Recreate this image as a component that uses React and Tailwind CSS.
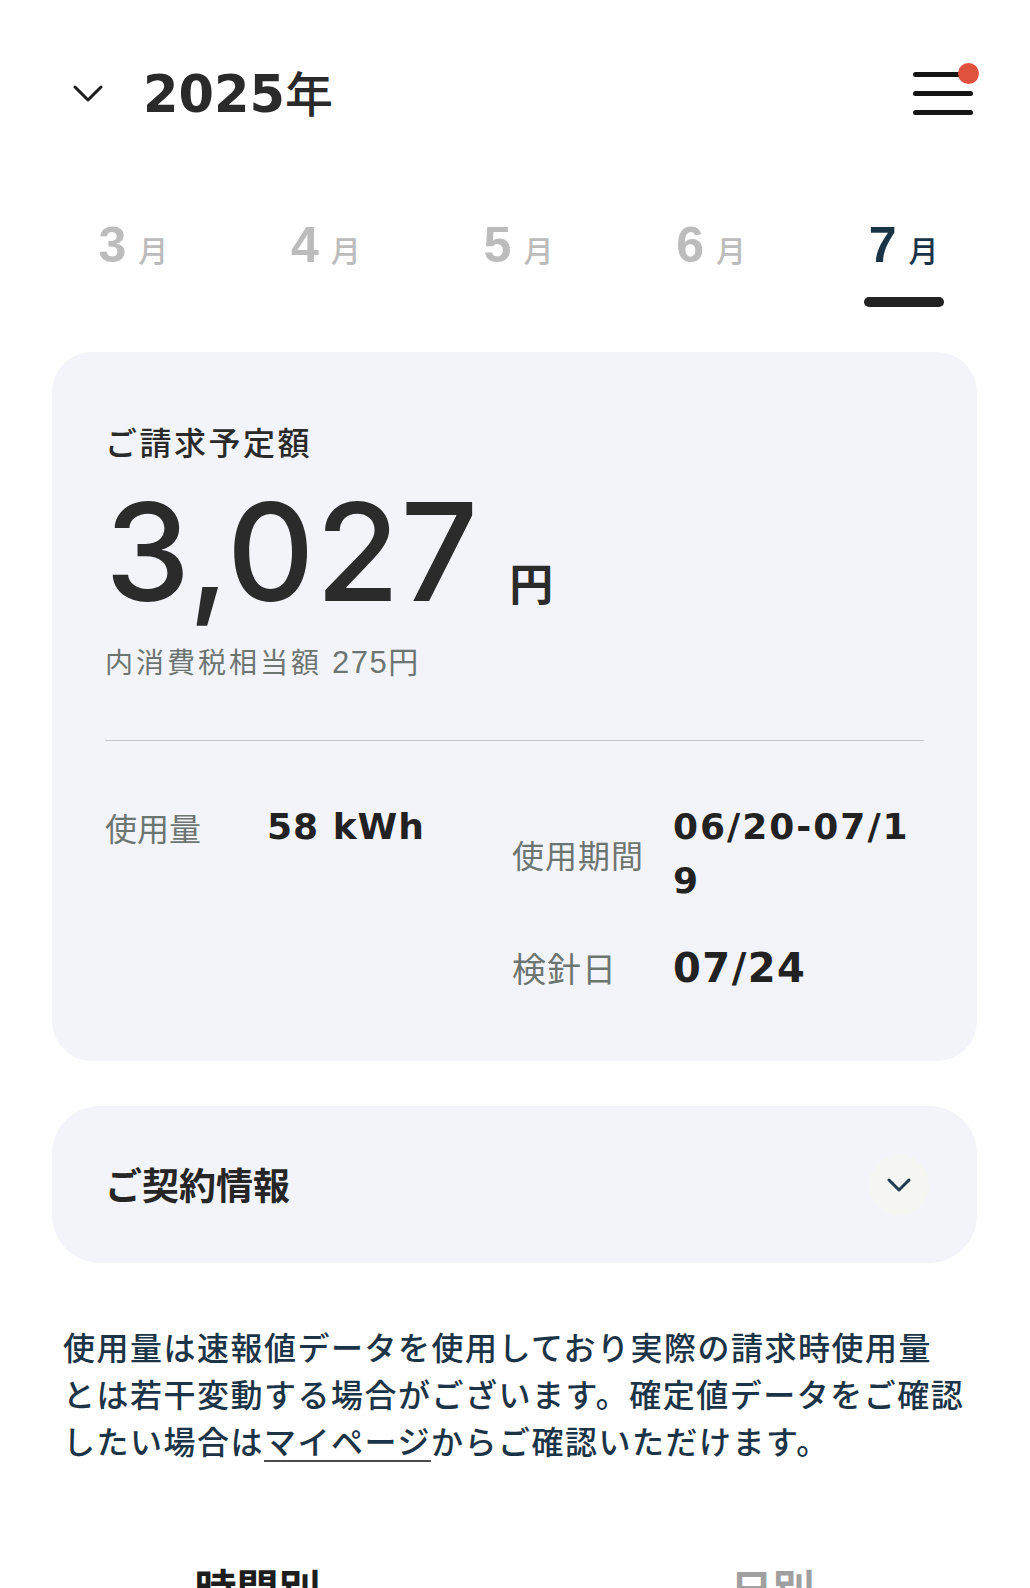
import React from 'react'

const months = ['3', '4', '5', '6', '7']

export default function App() {
  const active = '7'

  return (
    <div className="w-[1030px] h-[1588px] overflow-hidden bg-white font-['Noto_Sans_CJK_JP',sans-serif]">
      {/* header */}
      <div className="flex items-center h-[62px] mt-[62px] pl-[73px] pr-[57px]">
        <svg width="30" height="17" viewBox="0 0 30 17" fill="none">
          <polyline points="2,2 15,15 28,2" stroke="#1c1c1c" strokeWidth="3" strokeLinecap="round" strokeLinejoin="round" />
        </svg>
        <div className="ml-[40px] flex items-baseline text-[#2a2a2a]">
          <span className="font-['DejaVu_Sans',sans-serif] font-bold text-[51px] leading-none">2025</span>
          <span className="text-[48px] leading-none font-medium">年</span>
        </div>
        <div className="ml-auto relative w-[60px] h-[43px] flex flex-col justify-between">
          <span className="block h-[5px] w-full rounded-full bg-[#151515]" />
          <span className="block h-[5px] w-full rounded-full bg-[#151515]" />
          <span className="block h-[5px] w-full rounded-full bg-[#151515]" />
          <span className="absolute left-[45px] top-[-9px] w-[21px] h-[21px] rounded-full bg-[#e0513e]" />
        </div>
      </div>

      {/* month tabs */}
      <div className="flex w-[963px] ml-[37px] mt-[96px]">
        {months.map((m) => (
          <div key={m} className="flex-1 flex flex-col items-center">
            <div className={'flex items-baseline ' + (m === active ? 'text-[#1a3447]' : 'text-[#bcbcbc]')}>
              <span className="font-['Liberation_Sans',sans-serif] font-bold text-[50px] leading-none">{m}</span>
              <span className="ml-[12px] text-[30px] leading-none font-medium">月</span>
            </div>
            <div className={'mt-[27px] h-[10px] w-[80px] rounded-full ' + (m === active ? 'bg-[#222222]' : 'bg-transparent')} />
          </div>
        ))}
      </div>

      {/* bill card */}
      <div className="ml-[52px] w-[925px] mt-[45px] rounded-[40px] bg-[#f3f4f9] pt-[73px] px-[53px] pb-[66px]">
        <div className="text-[32px] leading-none tracking-[2.5px] font-medium text-[#2a2a2a]">ご請求予定額</div>
        <div className="flex items-baseline mt-[27px] text-[#2b2b2b]">
          <span className="font-['Inter',sans-serif] font-medium text-[136px] leading-none tracking-[1px]">3,027</span>
          <span className="ml-[30px] text-[44px] leading-none font-bold">円</span>
        </div>
        <div className="mt-[25px] flex items-baseline text-[#6d7572] leading-none">
          <span className="text-[28px] tracking-[3px]">内消費税相当額</span>
          <span className="ml-[10px] font-['Liberation_Sans',sans-serif] text-[31px] tracking-[1.5px]">275</span>
          <span className="text-[30px]">円</span>
        </div>
        <div className="mt-[62px] h-px bg-[#c3c6cc]" />

        <div className="flex items-start mt-[59px]">
          <div className="w-[407px] flex items-center">
            <span className="w-[162px] text-[32px] leading-[54px] text-[#6d7572]">使用量</span>
            <span className="font-['DejaVu_Sans',sans-serif] font-bold text-[36px] leading-[54px] tracking-[1px] text-[#222222]">58 kWh</span>
          </div>
          <div className="flex flex-col">
            <div className="flex items-center">
              <span className="w-[161px] text-[32px] leading-none tracking-[1px] text-[#6d7572]">使用期間</span>
              <span className="w-[251px] break-all font-['DejaVu_Sans',sans-serif] font-bold text-[36px] leading-[54px] tracking-[2px] text-[#222222]">06/20-07/19</span>
            </div>
            <div className="flex items-center mt-[33px]">
              <span className="w-[161px] text-[34px] leading-none tracking-[1px] text-[#6d7572]">検針日</span>
              <span className="font-['DejaVu_Sans',sans-serif] font-bold text-[40px] leading-[54px] tracking-[1.5px] text-[#222222]">07/24</span>
            </div>
          </div>
        </div>
      </div>

      {/* contract card */}
      <div className="ml-[52px] w-[925px] mt-[45px] h-[157px] rounded-[48px] bg-[#f3f4f9] flex items-center pl-[53px] pr-[48px]">
        <span className="text-[37px] leading-none font-bold text-[#262626]">ご契約情報</span>
        <div className="ml-auto w-[60px] h-[60px] rounded-full bg-[#f5f5f2] flex items-center justify-center">
          <svg width="24" height="14" viewBox="0 0 24 14" fill="none">
            <polyline points="2,2 12,12 22,2" stroke="#1d3a4f" strokeWidth="3" strokeLinecap="round" strokeLinejoin="round" />
          </svg>
        </div>
      </div>

      {/* note */}
      <p className="mt-[60px] pl-[63px] text-[32px] leading-[47px] tracking-[1.5px] font-medium text-[#1c3447] whitespace-nowrap">
        使用量は速報値データを使用しており実際の請求時使用量
        <br />
        とは若干変動する場合がございます。確定値データをご確認
        <br />
        したい場合は
        <span className="underline decoration-[#4a4a4a] decoration-2 underline-offset-[6px]">マイページ</span>
        からご確認いただけます。
      </p>

      {/* bottom tabs */}
      <div className="flex mt-[102px]">
        <div className="flex-1 text-center text-[42px] leading-none font-bold text-[#1e1e1e]">時間別</div>
        <div className="flex-1 text-center text-[42px] leading-none font-bold text-[#a0a0a0]">日別</div>
      </div>
    </div>
  )
}
